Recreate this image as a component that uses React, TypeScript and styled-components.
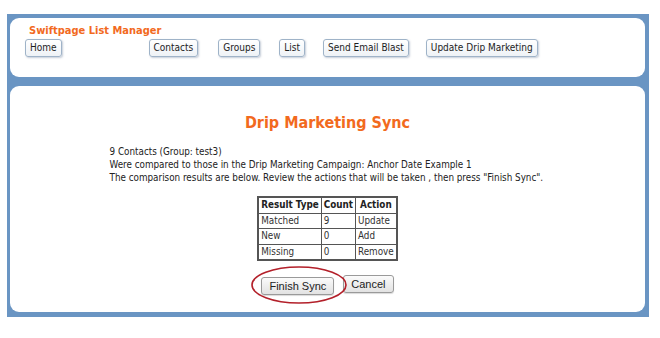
import React from "react";
import styled, { createGlobalStyle } from "styled-components";

const GlobalStyle = createGlobalStyle`
  html, body {
    margin: 0;
    padding: 0;
    background: #ffffff;
  }
  body {
    font-family: "DejaVu Sans Condensed", "DejaVu Sans", sans-serif;
    color: #222;
  }
`;

const navItems = [
  { label: "Home", gap: 0 },
  { label: "Contacts", gap: 87 },
  { label: "Groups", gap: 20 },
  { label: "List", gap: 19 },
  { label: "Send Email Blast", gap: 18 },
  { label: "Update Drip Marketing", gap: 17 },
];

const results = [
  { type: "Matched", count: 9, action: "Update" },
  { type: "New", count: 0, action: "Add" },
  { type: "Missing", count: 0, action: "Remove" },
];

export default function App() {
  return (
    <Page>
      <GlobalStyle />
      <Frame>
        <HeaderPanel>
          <Brand>Swiftpage List Manager</Brand>
          <Nav>
            {navItems.map((item) => (
              <NavButton key={item.label} $gap={item.gap}>
                {item.label}
              </NavButton>
            ))}
          </Nav>
        </HeaderPanel>
        <ContentPanel>
          <Title>Drip Marketing Sync</Title>
          <Summary>
            <div>9 Contacts (Group: test3)</div>
            <div>
              Were compared to those in the Drip Marketing Campaign: Anchor Date
              Example 1
            </div>
            <div>
              The comparison results are below. Review the actions that will be
              taken , then press "Finish Sync".
            </div>
          </Summary>
          <ResultTable>
            <thead>
              <tr>
                <Th>Result Type</Th>
                <Th>Count</Th>
                <Th>Action</Th>
              </tr>
            </thead>
            <tbody>
              {results.map((r) => (
                <tr key={r.type}>
                  <Td>{r.type}</Td>
                  <Td>{r.count}</Td>
                  <Td>{r.action}</Td>
                </tr>
              ))}
            </tbody>
          </ResultTable>
          <Actions>
            <Highlight>
              <FormButton>Finish Sync</FormButton>
              <Ring viewBox="0 0 98 40" aria-hidden="true">
                <ellipse
                  cx="49"
                  cy="20"
                  rx="47"
                  ry="18"
                  fill="none"
                  stroke="#b3202a"
                  strokeWidth="1.6"
                />
              </Ring>
            </Highlight>
            <FormButton>Cancel</FormButton>
          </Actions>
        </ContentPanel>
      </Frame>
    </Page>
  );
}

const Page = styled.div`
  padding: 14px 0 0 7px;
`;

const Frame = styled.div`
  width: 642px;
  box-sizing: border-box;
  background: #6a95c3;
  padding: 4px 4px 5px 3px;
  display: flex;
  flex-direction: column;
  gap: 9px;
`;

const HeaderPanel = styled.div`
  background: #fff;
  border-radius: 9px;
  height: 59px;
  box-sizing: border-box;
  padding: 6px 0 0 15px;
`;

const Brand = styled.div`
  font-weight: bold;
  font-size: 11px;
  color: #f26a1e;
  padding-left: 4px;
  line-height: 14px;
`;

const Nav = styled.div`
  display: flex;
  margin-top: 1px;
`;

const NavButton = styled.div<{ $gap: number }>`
  margin-left: ${({ $gap }) => $gap}px;
  font-size: 10px;
  color: #1d1d1d;
  padding: 2px 4px;
  line-height: 12px;
  border: 1px solid #9fb3c8;
  border-radius: 3px;
  background: linear-gradient(#ffffff, #eef2f6);
  box-shadow: 1px 1px 2px rgba(90, 110, 140, 0.35);
`;

const ContentPanel = styled.div`
  background: #fff;
  border-radius: 9px;
  height: 226px;
  box-sizing: border-box;
  padding-top: 27px;
  display: flex;
  flex-direction: column;
  align-items: center;
`;

const Title = styled.h1`
  margin: 0;
  font-size: 16px;
  line-height: 20px;
  font-weight: bold;
  color: #f26a1e;
`;

const Summary = styled.div`
  width: 436px;
  margin-top: 12px;
  font-size: 9.8px;
  line-height: 13px;
  color: #222;
`;

const ResultTable = styled.table`
  margin-top: 12px;
  border-collapse: collapse;
  border: 2px solid #555;
  font-size: 9.8px;
`;

const Th = styled.th`
  border: 1px solid #555;
  padding: 1px 2px;
  line-height: 12.5px;
  font-weight: bold;
  text-align: center;
`;

const Td = styled.td`
  border: 1px solid #555;
  padding: 1px 2px;
  line-height: 12.5px;
  text-align: left;
  color: #333;
`;

const Actions = styled.div`
  margin-top: 14px;
  display: flex;
  gap: 9px;
`;

const Highlight = styled.div`
  position: relative;
`;

const Ring = styled.svg`
  position: absolute;
  left: -11px;
  top: -10px;
  width: 98px;
  height: 40px;
  pointer-events: none;
`;

const FormButton = styled.button`
  font-family: "Liberation Sans", Arial, sans-serif;
  font-size: 11px;
  color: #222;
  height: 18px;
  padding: 0 7px;
  border: 1px solid #9a9a9a;
  border-radius: 3px;
  background: linear-gradient(#fbfbfb, #e2e2e2);
  box-shadow: 0 1px 1px rgba(0, 0, 0, 0.15);
`;
